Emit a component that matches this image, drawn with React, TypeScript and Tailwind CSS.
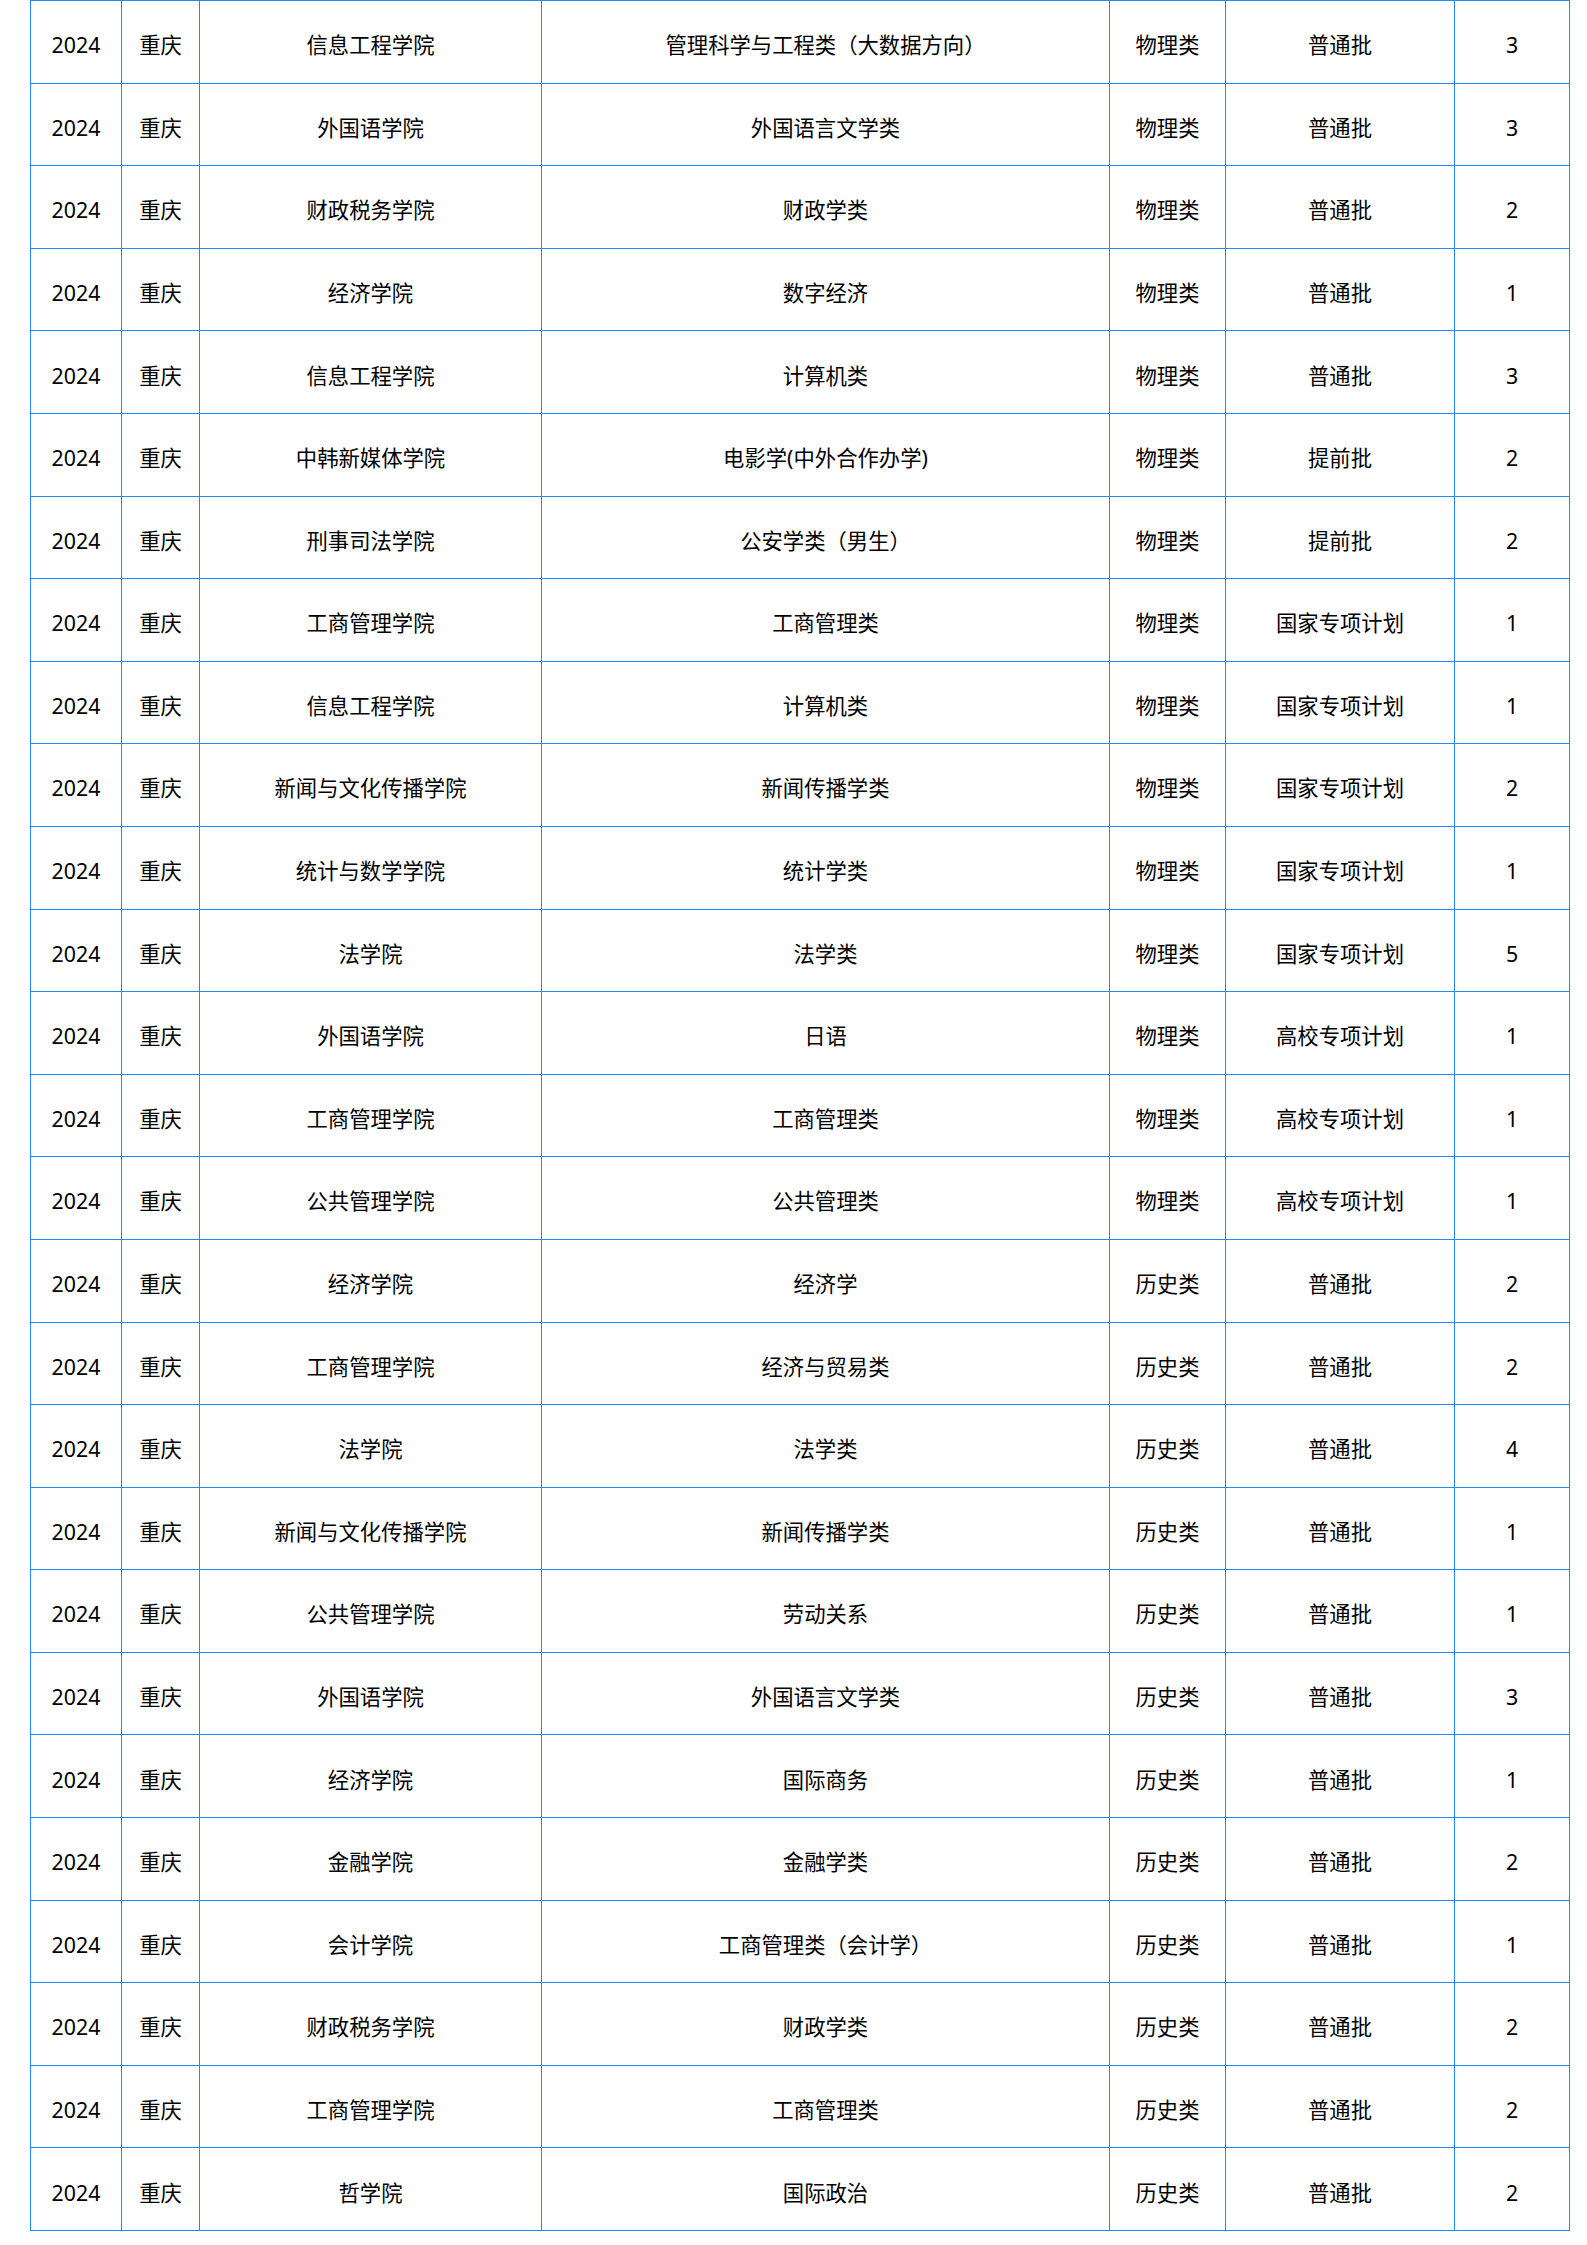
import React from "react";

const rows: [string, string, string, string, string][] = [
  ["信息工程学院", "管理科学与工程类（大数据方向）", "物理类", "普通批", "3"],
  ["外国语学院", "外国语言文学类", "物理类", "普通批", "3"],
  ["财政税务学院", "财政学类", "物理类", "普通批", "2"],
  ["经济学院", "数字经济", "物理类", "普通批", "1"],
  ["信息工程学院", "计算机类", "物理类", "普通批", "3"],
  ["中韩新媒体学院", "电影学(中外合作办学)", "物理类", "提前批", "2"],
  ["刑事司法学院", "公安学类（男生）", "物理类", "提前批", "2"],
  ["工商管理学院", "工商管理类", "物理类", "国家专项计划", "1"],
  ["信息工程学院", "计算机类", "物理类", "国家专项计划", "1"],
  ["新闻与文化传播学院", "新闻传播学类", "物理类", "国家专项计划", "2"],
  ["统计与数学学院", "统计学类", "物理类", "国家专项计划", "1"],
  ["法学院", "法学类", "物理类", "国家专项计划", "5"],
  ["外国语学院", "日语", "物理类", "高校专项计划", "1"],
  ["工商管理学院", "工商管理类", "物理类", "高校专项计划", "1"],
  ["公共管理学院", "公共管理类", "物理类", "高校专项计划", "1"],
  ["经济学院", "经济学", "历史类", "普通批", "2"],
  ["工商管理学院", "经济与贸易类", "历史类", "普通批", "2"],
  ["法学院", "法学类", "历史类", "普通批", "4"],
  ["新闻与文化传播学院", "新闻传播学类", "历史类", "普通批", "1"],
  ["公共管理学院", "劳动关系", "历史类", "普通批", "1"],
  ["外国语学院", "外国语言文学类", "历史类", "普通批", "3"],
  ["经济学院", "国际商务", "历史类", "普通批", "1"],
  ["金融学院", "金融学类", "历史类", "普通批", "2"],
  ["会计学院", "工商管理类（会计学）", "历史类", "普通批", "1"],
  ["财政税务学院", "财政学类", "历史类", "普通批", "2"],
  ["工商管理学院", "工商管理类", "历史类", "普通批", "2"],
  ["哲学院", "国际政治", "历史类", "普通批", "2"],
];

function Cell({ children }: { children: React.ReactNode }) {
  return (
    <div className="flex items-center justify-center border-r border-b border-[#1e8cff] pt-[6px] whitespace-nowrap">
      {children}
    </div>
  );
}

export default function App() {
  return (
    <div className="w-[1587px] min-h-[2245px] bg-white">
      <div
        className="ml-[30px] w-[1540px] border-l border-t border-[#1e8cff] text-[21.33px] text-black leading-none"
        style={{ fontFamily: '"Noto Sans", "Noto Sans CJK SC", sans-serif' }}
      >
        {rows.map((r, i) => (
          <div
            key={i}
            className="grid grid-cols-[91px_78px_342px_568px_116px_229px_115px] h-[82.6px]"
          >
            <Cell>2024</Cell>
            <Cell>重庆</Cell>
            <Cell>{r[0]}</Cell>
            <Cell>{r[1]}</Cell>
            <Cell>{r[2]}</Cell>
            <Cell>{r[3]}</Cell>
            <Cell>{r[4]}</Cell>
          </div>
        ))}
      </div>
    </div>
  );
}
